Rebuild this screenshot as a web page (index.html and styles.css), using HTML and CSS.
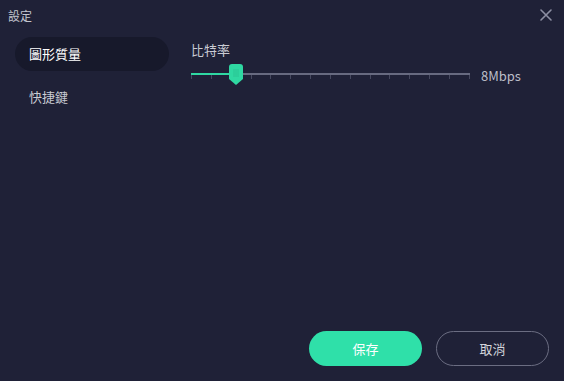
FILE: index.html
```html
<!DOCTYPE html>
<html lang="zh-Hant">

<head>
    <meta charset="UTF-8">
    <meta name="viewport" content="width=device-width, initial-scale=1.0">
    <title>設定</title>
    <link rel="stylesheet" href="styles.css">
</head>

<body>
    <div class="dialog">
        <header class="titlebar">
            <span class="title">設定</span>
            <button class="close" type="button" aria-label="關閉">
                <svg width="12" height="12" viewBox="0 0 12 12">
                    <path d="M1 1L11 11M11 1L1 11" stroke="#8d8fa3" stroke-width="1.6" stroke-linecap="round" />
                </svg>
            </button>
        </header>

        <div class="main">
            <ul class="menu">
                <li class="menu-item active">圖形質量</li>
                <li class="menu-item">快捷鍵</li>
            </ul>

            <section class="content">
                <div class="label">比特率</div>
                <div class="slider-row">
                    <div class="slider">
                        <div class="track"><div class="fill"></div></div>
                        <div class="ticks">
                            <span></span><span></span><span></span><span></span><span></span>
                            <span></span><span></span><span></span><span></span><span></span>
                            <span></span><span></span><span></span><span></span><span></span>
                        </div>
                        <svg class="thumb" width="14" height="21" viewBox="0 0 14 21">
                            <path d="M3 0H11Q14 0 14 3V15L7 21L0 15V3Q0 0 3 0Z" fill="#2fd8a2" />
                            <path d="M5 5V13M7 5V13M9 5V13" stroke="#28c090" stroke-width="0.8" />
                        </svg>
                    </div>
                    <span class="value">8Mbps</span>
                </div>
            </section>
        </div>

        <footer class="actions">
            <button class="btn btn-save" type="button">保存</button>
            <button class="btn btn-cancel" type="button">取消</button>
        </footer>
    </div>
</body>

</html>
```

FILE: styles.css
```css
body {
    margin: 0;
    padding: 0;
    background-color: #1f2137;
    font-family: "Noto Sans CJK TC", "Noto Sans", sans-serif;
}

.dialog {
    width: 564px;
    height: 381px;
    display: flex;
    flex-direction: column;
    background-color: #1f2137;
}

.titlebar {
    height: 30px;
    display: flex;
    align-items: center;
    justify-content: space-between;
    padding: 0 12px 0 8px;
}

.title {
    font-size: 12px;
    color: #c3c5cf;
}

.close {
    background: none;
    border: none;
    padding: 0;
    width: 12px;
    height: 12px;
    display: flex;
}

.main {
    flex: 1;
    display: flex;
}

.menu {
    list-style-type: none;
    margin: 7px 0 0 15px;
    padding: 0;
    width: 154px;
}

.menu-item {
    height: 34px;
    line-height: 34px;
    padding-left: 14px;
    margin-bottom: 9px;
    border-radius: 17px;
    font-size: 13px;
    color: #c9cbd3;
}

.menu-item.active {
    background-color: #17192b;
    color: #ffffff;
}

.content {
    margin-left: 22px;
    padding-top: 11px;
}

.label {
    font-size: 13px;
    line-height: 18px;
    color: #c9cbd3;
}

.slider-row {
    display: flex;
    align-items: center;
    margin-top: 5px;
}

.slider {
    position: relative;
    width: 279px;
    height: 21px;
    padding-top: 9px;
    box-sizing: border-box;
}

.track {
    height: 2px;
    background-color: #676a80;
    display: flex;
}

.fill {
    width: 42px;
    background-color: #2fd8a2;
}

.ticks {
    display: flex;
    justify-content: space-between;
}

.ticks span {
    width: 1px;
    height: 4px;
    background-color: #46495f;
}

.thumb {
    position: absolute;
    left: 38px;
    top: 0;
}

.value {
    margin-left: 11px;
    margin-top: 2px;
    font-size: 13px;
    color: #bcbec8;
}

.actions {
    display: flex;
    justify-content: flex-end;
    gap: 14px;
    padding: 0 15px 15px 0;
}

.btn {
    width: 113px;
    height: 35px;
    border-radius: 18px;
    font-family: "Noto Sans CJK TC", "Noto Sans", sans-serif;
    font-size: 13px;
}

.btn-save {
    background-color: #2fe0a9;
    border: none;
    color: #ffffff;
}

.btn-cancel {
    background-color: transparent;
    border: 1px solid #6b6d82;
    color: #d3d5dc;
}
```
